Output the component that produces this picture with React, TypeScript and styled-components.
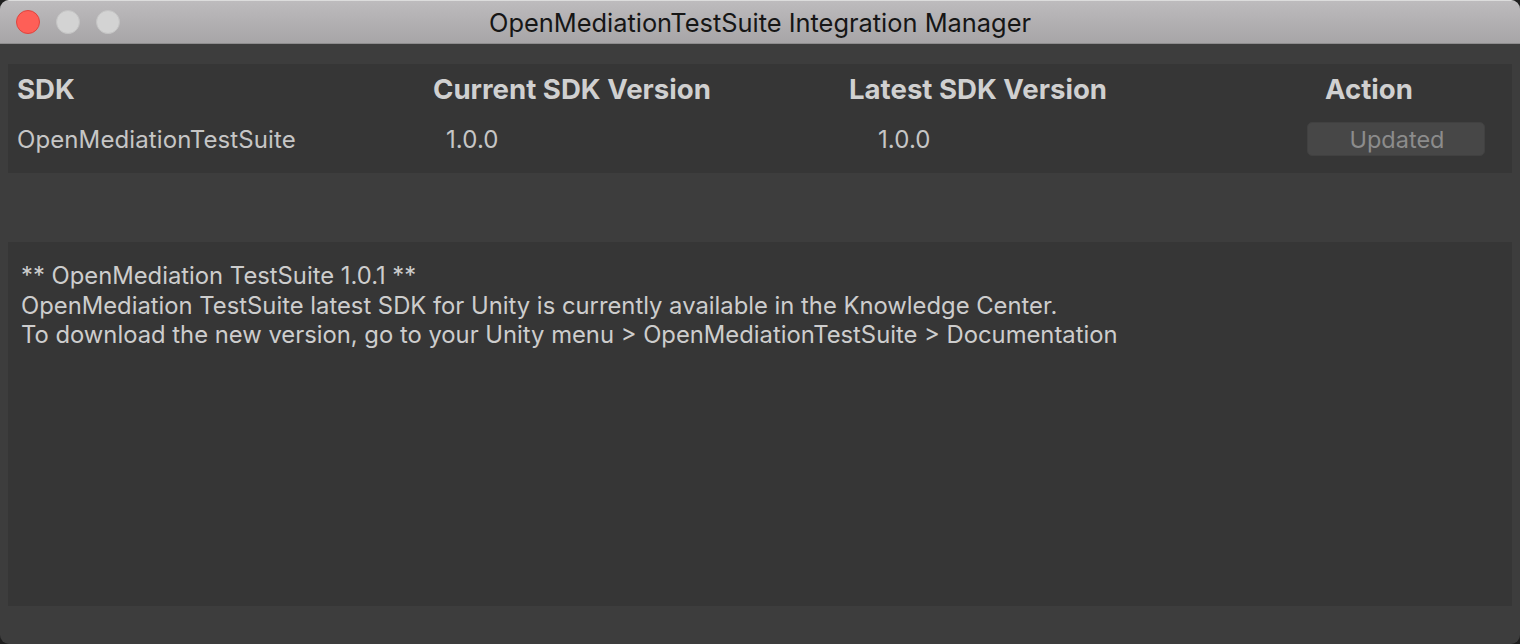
import React from "react";
import styled, { createGlobalStyle } from "styled-components";

const GlobalStyle = createGlobalStyle`
  html, body {
    margin: 0;
    padding: 0;
    background: #1f1f1f;
  }
  * {
    box-sizing: border-box;
  }
`;

const Window = styled.div`
  display: flex;
  flex-direction: column;
  width: 1520px;
  height: 644px;
  border-radius: 9px;
  overflow: hidden;
  background: #3d3d3d;
  font-family: Inter, "Noto Sans", sans-serif;
`;

const TitleBar = styled.div`
  position: relative;
  display: flex;
  align-items: center;
  justify-content: center;
  height: 44px;
  flex: 0 0 44px;
  background: linear-gradient(#bdbbbd, #a7a5a7);
  border-top: 1px solid #dcdcdc;
  border-bottom: 1px solid #8e8d8e;
`;

const Lights = styled.div`
  position: absolute;
  left: 16px;
  top: 9px;
  display: flex;
  gap: 16px;
`;

const Light = styled.span<{ $color: string; $border: string }>`
  width: 24px;
  height: 24px;
  border-radius: 50%;
  background: ${(p) => p.$color};
  border: 1px solid ${(p) => p.$border};
`;

const Title = styled.div`
  font-size: 25.4px;
  color: #161616;
`;

const Body = styled.div`
  display: flex;
  flex-direction: column;
  flex: 1;
  padding: 20px 8px 38px 8px;
`;

const Table = styled.div`
  display: grid;
  grid-template-columns: 416px 416px 458px 1fr;
  grid-auto-rows: 50px;
  padding: 0 9px 9px 9px;
  background: #363636;
`;

const Cell = styled.div<{ $indent?: number }>`
  display: flex;
  align-items: center;
  padding-left: ${(p) => p.$indent ?? 0}px;
  white-space: nowrap;
`;

const HeadText = styled.span`
  font-size: 27.6px;
  font-weight: 700;
  color: #d0d0d0;
`;

const ValueText = styled.span`
  font-size: 24px;
  letter-spacing: 0.1px;
  color: #c6c6c6;
`;

const StatusButton = styled.button`
  width: 178px;
  height: 34px;
  border: 1px solid #414141;
  border-radius: 5px;
  background: #474747;
  color: #8c8c8c;
  font-family: Inter, "Noto Sans", sans-serif;
  font-size: 23.5px;
  padding: 0 0 0 2px;
`;

const Spacer = styled.div`
  height: 69px;
  flex: 0 0 69px;
`;

const Notes = styled.div`
  flex: 1;
  background: #363636;
  padding: 19px 13px;
  font-size: 23.8px;
  line-height: 29.5px;
  color: #cdcdcd;
`;

const columns = [
  { title: "SDK", indent: 0 },
  { title: "Current SDK Version", indent: 0 },
  { title: "Latest SDK Version", indent: 0 },
  { title: "Action", indent: 18 },
];

const notes = [
  "** OpenMediation TestSuite 1.0.1 **",
  "OpenMediation TestSuite latest SDK for Unity is currently available in the Knowledge Center.",
  "To download the new version, go to your Unity menu > OpenMediationTestSuite > Documentation",
];

export default function App() {
  return (
    <>
      <GlobalStyle />
      <Window>
        <TitleBar>
          <Lights>
            <Light $color="#fe5f57" $border="#e0443e" />
            <Light $color="#d3d3d3" $border="#c4c4c4" />
            <Light $color="#d3d3d3" $border="#c4c4c4" />
          </Lights>
          <Title>OpenMediationTestSuite Integration Manager</Title>
        </TitleBar>
        <Body>
          <Table>
            {columns.map((c) => (
              <Cell key={c.title} $indent={c.indent}>
                <HeadText>{c.title}</HeadText>
              </Cell>
            ))}
            <Cell>
              <ValueText>OpenMediationTestSuite</ValueText>
            </Cell>
            <Cell $indent={13}>
              <ValueText>1.0.0</ValueText>
            </Cell>
            <Cell $indent={29}>
              <ValueText>1.0.0</ValueText>
            </Cell>
            <Cell>
              <StatusButton disabled>Updated</StatusButton>
            </Cell>
          </Table>
          <Spacer />
          <Notes>
            {notes.map((line) => (
              <div key={line}>{line}</div>
            ))}
          </Notes>
        </Body>
      </Window>
    </>
  );
}
